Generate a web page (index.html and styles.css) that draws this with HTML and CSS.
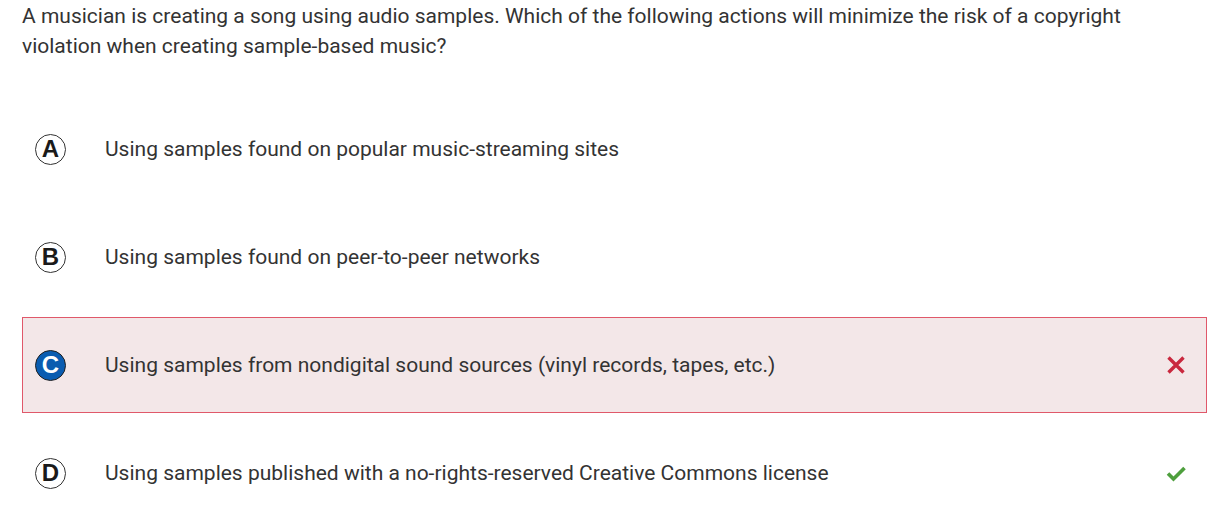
FILE: index.html
```html
<!DOCTYPE html>
<html>
<head>
<meta charset="utf-8">
<link rel="stylesheet" href="styles.css">
</head>
<body>
<div class="page">
  <p class="question">A musician is creating a song using audio samples. Which of the following actions will minimize the risk of a copyright violation when creating sample-based music?</p>
  <div class="options">
    <div class="option">
      <span class="letter">A</span>
      <span class="text">Using samples found on popular music-streaming sites</span>
    </div>
    <div class="option">
      <span class="letter">B</span>
      <span class="text">Using samples found on peer-to-peer networks</span>
    </div>
    <div class="option wrong">
      <span class="letter selected">C</span>
      <span class="text">Using samples from nondigital sound sources (vinyl records, tapes, etc.)</span>
      <svg class="mark" width="20" height="20" viewBox="0 0 20 20"><path d="M2.5 2.5 L17.5 17.5 M17.5 2.5 L2.5 17.5" stroke="#c9283e" stroke-width="3.4" fill="none"/></svg>
    </div>
    <div class="option">
      <span class="letter">D</span>
      <span class="text">Using samples published with a no-rights-reserved Creative Commons license</span>
      <svg class="mark" width="20" height="20" viewBox="0 0 20 20"><path d="M2 10.5 L7.5 16 L18.5 5" stroke="#4e9f3d" stroke-width="3.6" fill="none"/></svg>
    </div>
  </div>
</div>
</body>
</html>
```

FILE: styles.css
```css
html, body {
  margin: 0;
  padding: 0;
  background: #ffffff;
}
.page {
  padding: 1px 6px 0 22px;
  font-family: Roboto, "Liberation Sans", sans-serif;
  color: #333333;
}
.question {
  margin: 0;
  font-size: 21px;
  line-height: 30px;
  padding-right: 60px;
}
.options {
  margin-top: 40px;
  display: flex;
  flex-direction: column;
  gap: 12px;
}
.option {
  display: flex;
  align-items: center;
  height: 96px;
  box-sizing: border-box;
  border: 1px solid transparent;
  padding: 0 20px 0 12px;
  font-size: 21px;
}
.option.wrong {
  background: #f3e7e8;
  border-color: #e0586a;
}
.letter {
  width: 31px;
  height: 31px;
  box-sizing: border-box;
  border: 1.5px solid #333333;
  border-radius: 50%;
  display: flex;
  align-items: center;
  justify-content: center;
  font-family: "Liberation Sans", Arial, sans-serif;
  font-weight: bold;
  font-size: 24px;
  line-height: 1;
  color: #1a1a1a;
  flex: none;
  margin-right: 39px;
}
.letter.selected {
  background: #0a5cb0;
  border-color: #222222;
  color: #ffffff;
}
.text {
  flex: 1;
}
.mark {
  flex: none;
}
```
